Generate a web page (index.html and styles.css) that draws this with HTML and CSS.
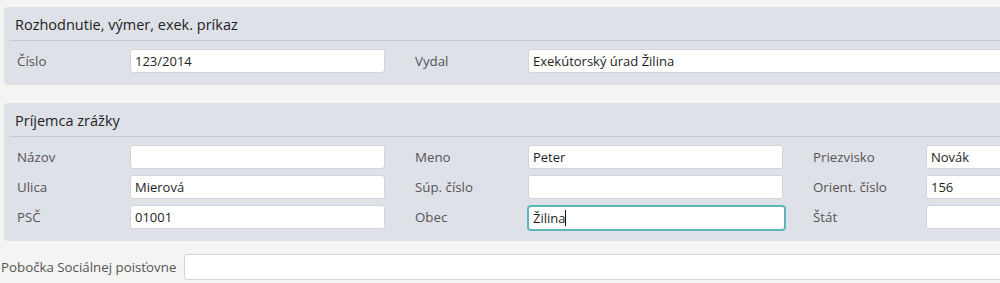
FILE: index.html
```html
<!DOCTYPE html>
<html lang="sk">
<head>
<meta charset="utf-8">
<title>Formulár</title>
<link rel="stylesheet" href="styles.css">
</head>
<body>
<div class="page">
  <section class="panel panel-first">
    <div class="panel-head">Rozhodnutie, výmer, exek. príkaz</div>
    <div class="grid">
      <div class="field"><label class="lbl">Číslo</label><input class="inp" type="text" value="123/2014"></div>
      <div class="field field-wide"><label class="lbl">Vydal</label><input class="inp inp-wide" type="text" value="Exekútorský úrad Žilina"></div>
    </div>
  </section>

  <section class="panel panel-second">
    <div class="panel-head">Príjemca zrážky</div>
    <div class="grid">
      <div class="field"><label class="lbl">Názov</label><input class="inp" type="text" value=""></div>
      <div class="field"><label class="lbl">Meno</label><input class="inp" type="text" value="Peter"></div>
      <div class="field"><label class="lbl">Priezvisko</label><input class="inp" type="text" value="Novák"></div>

      <div class="field"><label class="lbl">Ulica</label><input class="inp" type="text" value="Mierová"></div>
      <div class="field"><label class="lbl">Súp. číslo</label><input class="inp" type="text" value=""></div>
      <div class="field"><label class="lbl">Orient. číslo</label><input class="inp" type="text" value="156"></div>

      <div class="field"><label class="lbl">PSČ</label><input class="inp" type="text" value="01001"></div>
      <div class="field"><label class="lbl">Obec</label><span class="focus-wrap"><input class="inp inp-focus" type="text" value="Žilina"><span class="caret"></span></span></div>
      <div class="field"><label class="lbl">Štát</label><input class="inp" type="text" value=""></div>
    </div>
  </section>

  <div class="bottom-row">
    <label class="lbl-plain">Pobočka Sociálnej poisťovne</label>
    <input class="inp inp-bottom" type="text" value="">
  </div>
</div>
</body>
</html>
```

FILE: styles.css
```css
* { box-sizing: border-box; }
html, body { margin: 0; padding: 0; }
body {
  background: #f4f4f3;
  font-family: "Open Sans", "Noto Sans", sans-serif;
  font-size: 13px;
  color: #222;
  overflow: hidden;
  width: 1000px;
  height: 283px;
}
.page {
  width: 1300px;
  padding-top: 7px;
}
.panel {
  margin-left: 4px;
  background: #dfe1e8;
  border-radius: 4px 0 0 4px;
}
.panel-first { margin-bottom: 18px; padding-bottom: 12px; }
.panel-second { padding-bottom: 12px; }
.panel-head {
  height: 34px;
  line-height: 35px;
  margin-left: 6px;
  padding-left: 5px;
  font-size: 14.5px;
  color: #1e1e1e;
  border-bottom: 1px solid #c6cad3;
}
.grid {
  display: grid;
  grid-template-columns: 398px 398px 398px;
  row-gap: 6px;
  padding-top: 8px;
}
.field {
  display: flex;
  align-items: center;
  height: 24px;
}
.field-wide { grid-column: span 2; }
.lbl {
  width: 113px;
  margin-left: 13px;
  color: #555;
  font-size: 13.3px;
  flex: none;
}
.inp {
  width: 255px;
  height: 24px;
  border: 1px solid #d2d4d9;
  border-radius: 3px;
  background: #fff;
  font-family: "Open Sans", "Noto Sans", sans-serif;
  font-size: 13px;
  color: #1e1e1e;
  padding: 0 4px;
  margin: 0;
  outline: none;
}
.inp-wide { width: 700px; }
.focus-wrap {
  position: relative;
  display: inline-block;
  height: 26px;
  align-self: flex-start;
}
.inp-focus {
  height: 26px;
  width: 259px;
  margin-left: -1px;
  border: 2px solid #5bb6be;
  border-radius: 4px;
  padding: 0 4px;
}
.caret {
  position: absolute;
  left: 37px;
  top: 5px;
  width: 1px;
  height: 16px;
  background: #111;
}
.bottom-row {
  display: flex;
  align-items: center;
  margin-top: 13px;
  padding-left: 1px;
}
.lbl-plain {
  width: 183px;
  color: #555;
  font-size: 13.3px;
  flex: none;
}
.inp-bottom {
  width: 900px;
  height: 26px;
}
```
